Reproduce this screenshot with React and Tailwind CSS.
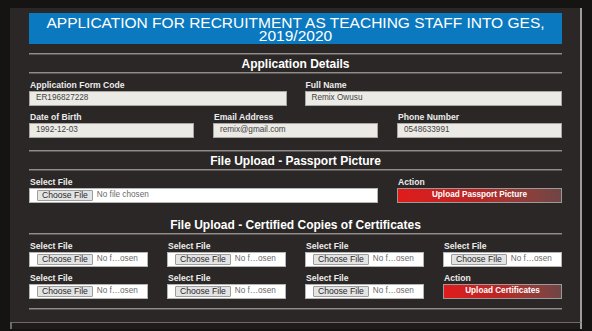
import React from "react";

const font = { fontFamily: '"Liberation Sans", Arial, sans-serif' };

function Hr() {
  return <div className="h-[2px] w-full border-t border-[#8f8c8a] bg-[#5a5654]" />;
}

function Heading({ children, className = "" }) {
  return (
    <div className={"h-[17px] flex items-center justify-center text-[12px] font-bold text-white leading-none " + className}>
      {children}
    </div>
  );
}

function Label({ children }) {
  return <div className="h-[11px] flex items-center text-[8.6px] font-bold text-[#ececec] leading-none pl-[1px]">{children}</div>;
}

function TextBox({ value }) {
  return (
    <div className="h-[15px] bg-[#ebeae5] border border-[#a9a7a3] flex items-center pl-[6px] text-[8.2px] text-[#444] leading-none">
      {value}
    </div>
  );
}

function FileBox({ text }) {
  return (
    <div className="h-[15px] bg-white border border-[#b5b5b5] flex items-center pl-[7px] gap-[4px] leading-none">
      <div className="h-[11px] px-[4px] bg-[#e4e4e4] border border-[#9d9d9d] rounded-[1px] flex items-center text-[8.6px] text-[#2a2a2a]">
        Choose File
      </div>
      <span className="text-[8.2px] text-[#6a6a6a]">{text}</span>
    </div>
  );
}

function RedButton({ children }) {
  return (
    <div className="h-[15px] border border-[#9a9a9a] bg-gradient-to-r from-[#e01b1b] via-[#b82626] to-[#6e4545] flex items-center justify-center text-[8.2px] font-bold text-white leading-none">
      {children}
    </div>
  );
}

function Field({ label, children }) {
  return (
    <div className="flex flex-col">
      <Label>{label}</Label>
      {children}
    </div>
  );
}

export default function App() {
  return (
    <div className="w-[592px] h-[331px] bg-[#161413] overflow-hidden pt-[8px] pl-[10px]" style={font}>
      <div className="w-[572px] bg-[#2b2726] border-r-2 border-[#9d9b99] border-b border-b-[#6e6b69] pt-[5px] pl-[19px] pr-[18px] pb-[12px]">
        <div className="h-[31px] bg-[#0b79bf] flex flex-col items-center justify-center text-white text-[15.5px] leading-[13px] text-center">
          <div>APPLICATION FOR RECRUITMENT AS TEACHING STAFF INTO GES,</div>
          <div>2019/2020</div>
        </div>

        <div className="mt-[9px]"><Hr /></div>
        <Heading>Application Details</Heading>
        <Hr />

        <div className="mt-[6px] grid grid-cols-2 gap-x-[18px]">
          <Field label="Application Form Code"><TextBox value="ER196827228" /></Field>
          <Field label="Full Name"><TextBox value="Remix Owusu" /></Field>
        </div>
        <div className="mt-[6px] grid grid-cols-3 gap-x-[19px]">
          <Field label="Date of Birth"><TextBox value="1992-12-03" /></Field>
          <Field label="Email Address"><TextBox value="remix@gmail.com" /></Field>
          <Field label="Phone Number"><TextBox value="0548633991" /></Field>
        </div>

        <div className="mt-[12px]"><Hr /></div>
        <Heading>File Upload - Passport Picture</Heading>
        <Hr />

        <div className="mt-[6px] grid grid-cols-3 gap-x-[19px]">
          <div className="col-span-2">
            <Field label="Select File"><FileBox text="No file chosen" /></Field>
          </div>
          <Field label="Action"><RedButton>Upload Passport Picture</RedButton></Field>
        </div>

        <Heading className="mt-[13px]">File Upload - Certified Copies of Certificates</Heading>
        <Hr />

        <div className="mt-[6px] grid grid-cols-4 gap-x-[19px] gap-y-[6px]">
          <Field label="Select File"><FileBox text="No f…osen" /></Field>
          <Field label="Select File"><FileBox text="No f…osen" /></Field>
          <Field label="Select File"><FileBox text="No f…osen" /></Field>
          <Field label="Select File"><FileBox text="No f…osen" /></Field>
          <Field label="Select File"><FileBox text="No f…osen" /></Field>
          <Field label="Select File"><FileBox text="No f…osen" /></Field>
          <Field label="Select File"><FileBox text="No f…osen" /></Field>
          <Field label="Action"><RedButton>Upload Certificates</RedButton></Field>
        </div>

        <div className="mt-[9px]"><Hr /></div>
      </div>
      <div className="w-[572px] h-[6px] border-l-2 border-l-[#6e6b69] border-r-2 border-r-[#9d9b99] bg-[#1e1b1a]" />
    </div>
  );
}
